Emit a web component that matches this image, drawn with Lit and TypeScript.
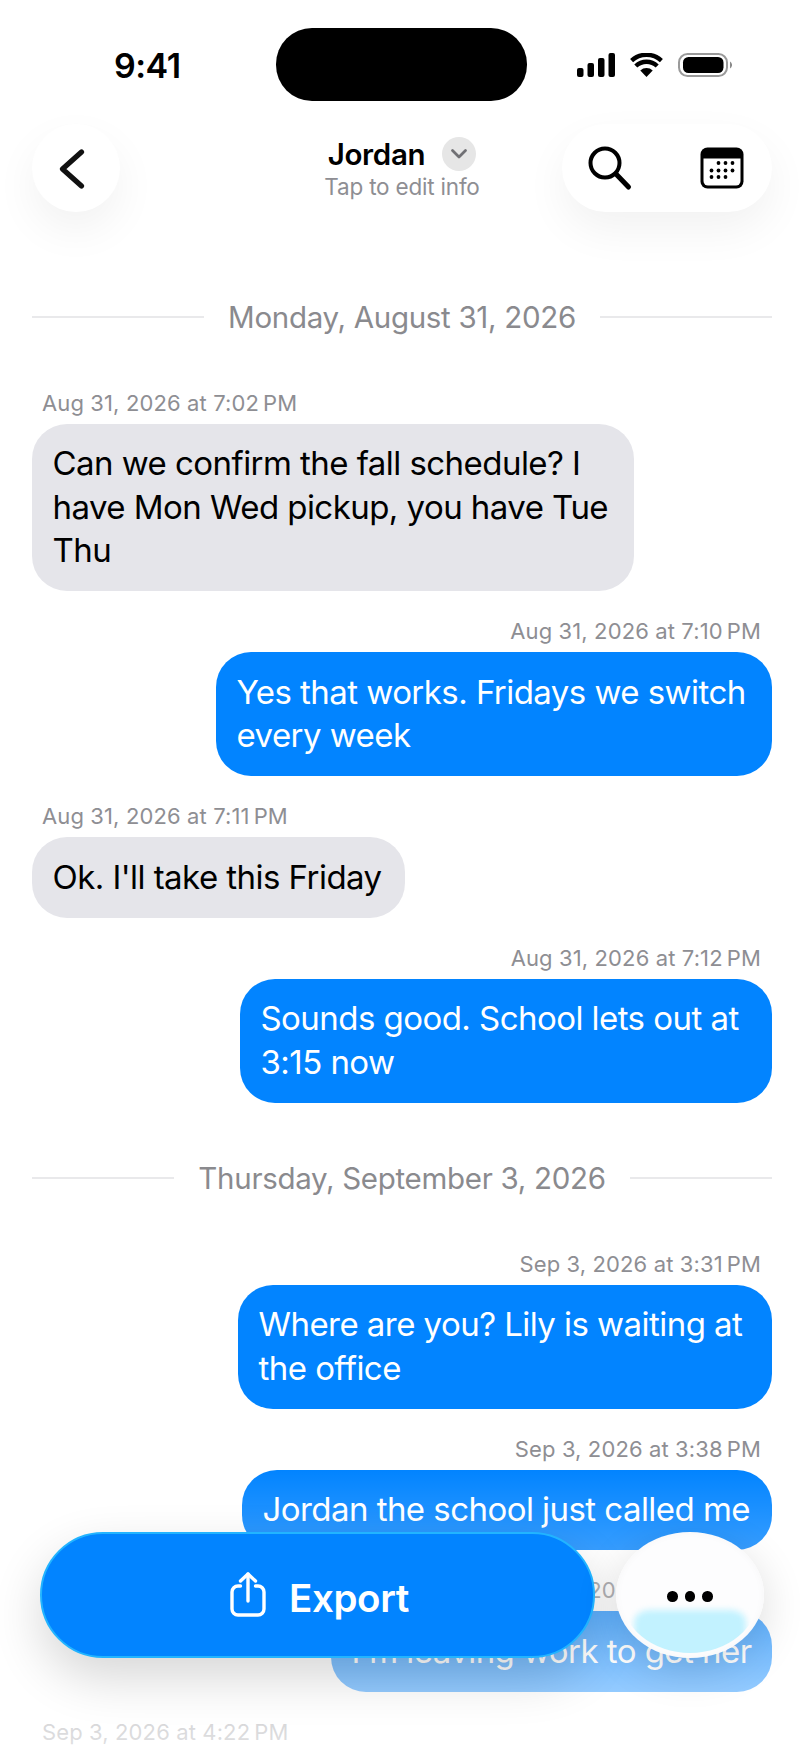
import { LitElement, html, css, svg } from "lit";
import { customElement } from "lit/decorators.js";

type Item =
  | { kind: "day"; label: string }
  | { kind: "msg"; side: "in" | "out"; ts: string; lines: string[]; w: number };

const items: Item[] = [
  { kind: "day", label: "Monday, August 31, 2026" },
  { kind: "msg", side: "in", ts: "Aug 31, 2026 at 7:02\u202FPM", w: 602, lines: ["Can we confirm the fall schedule? I", "have Mon Wed pickup, you have Tue", "Thu"] },
  { kind: "msg", side: "out", ts: "Aug 31, 2026 at 7:10\u202FPM", w: 556, lines: ["Yes that works. Fridays we switch", "every week"] },
  { kind: "msg", side: "in", ts: "Aug 31, 2026 at 7:11\u202FPM", w: 373, lines: ["Ok. I'll take this Friday"] },
  { kind: "msg", side: "out", ts: "Aug 31, 2026 at 7:12\u202FPM", w: 532, lines: ["Sounds good. School lets out at", "3:15 now"] },
  { kind: "day", label: "Thursday, September 3, 2026" },
  { kind: "msg", side: "out", ts: "Sep 3, 2026 at 3:31\u202FPM", w: 534, lines: ["Where are you? Lily is waiting at", "the office"] },
  { kind: "msg", side: "out", ts: "Sep 3, 2026 at 3:38\u202FPM", w: 530, lines: ["Jordan the school just called me"] },
  { kind: "msg", side: "out", ts: "Sep 3, 2026 at 3:52\u202FPM", w: 441, lines: ["I'm leaving work to get her"] },
  { kind: "msg", side: "in", ts: "Sep 3, 2026 at 4:22\u202FPM", w: 0, lines: [] },
];

const calendarDots = [
  [16.5, 16], [23.5, 16], [30.5, 16],
  [9.5, 23.5], [16.5, 23.5], [23.5, 23.5], [30.5, 23.5],
  [9.5, 30], [16.5, 30], [23.5, 30],
];

@customElement("app-root")
export class AppRoot extends LitElement {
  static styles = css`
    :host {
      display: block;
      position: relative;
      width: 804px;
      height: 1748px;
      overflow: hidden;
      background: #fff;
      font-family: Inter, "Liberation Sans", sans-serif;
      color: #000;
    }
    .status {
      height: 124px;
      box-sizing: border-box;
      padding: 28px 0 0 114px;
      display: flex;
      align-items: flex-start;
    }
    .time {
      width: 162px;
      margin-top: 19px;
      font-size: 34px;
      line-height: 38px;
      font-weight: 600;
      letter-spacing: -0.5px;
    }
    .island {
      width: 251px;
      height: 73px;
      border-radius: 36px;
      background: #000;
    }
    .sys {
      margin: 25px 0 0 50px;
      display: flex;
      align-items: flex-start;
    }
    .sys svg { display: block; }
    .nav {
      height: 88px;
      padding: 0 32px;
      display: grid;
      grid-template-columns: 1fr auto 1fr;
      align-items: center;
    }
    .glass {
      background: #fff;
      box-shadow: 0 18px 44px rgba(0, 0, 0, 0.055);
      display: flex;
      align-items: center;
    }
    .back {
      width: 88px;
      height: 88px;
      border-radius: 50%;
    }
    .pill {
      justify-self: end;
      width: 210px;
      height: 88px;
      border-radius: 44px;
    }
    .title {
      align-self: start;
      padding-top: 11px;
      display: flex;
      flex-direction: column;
      align-items: center;
    }
    .name-row {
      display: flex;
      align-items: center;
      gap: 17px;
      height: 38px;
    }
    .name {
      font-size: 29.5px;
      line-height: 38px;
      font-weight: 600;
      letter-spacing: -0.3px;
    }
    .badge {
      width: 34px;
      height: 34px;
      border-radius: 50%;
      background: #e6e6e6;
      display: flex;
      align-items: center;
      justify-content: center;
    }
    .sub {
      font-size: 22.5px;
      line-height: 30px;
      margin-top: -1px;
      color: #8e8e93;
      letter-spacing: -0.2px;
    }
    .list {
      padding: 84.5px 32px 0;
      display: flex;
      flex-direction: column;
    }
    .day {
      height: 40px;
      display: flex;
      align-items: center;
      gap: 24px;
      margin-bottom: 52px;
      font-size: 29.5px;
      color: #8a8a8e;
      letter-spacing: -0.3px;
      white-space: nowrap;
    }
    .msg + .day { margin-top: 29px; }
    .day::before, .day::after {
      content: "";
      flex: 1;
      height: 2px;
      background: #e9e9eb;
    }
    .msg {
      display: flex;
      flex-direction: column;
      margin-bottom: 26px;
    }
    .msg.out { align-items: flex-end; }
    .msg.in { align-items: flex-start; }
    .ts {
      font-size: 22px;
      line-height: 28px;
      margin-bottom: 7px;
      padding: 0 11px 0 10px;
      color: #8e8e93;
      letter-spacing: 0.12px;
      white-space: nowrap;
    }
    .bubble {
      box-sizing: border-box;
      padding: 18.5px 20.5px;
      border-radius: 35px;
      font-size: 33px;
      line-height: 43.5px;
      letter-spacing: -0.55px;
      white-space: nowrap;
    }
    .in .bubble { background: #e5e5ea; color: #000; }
    .out .bubble { background: #0284ff; color: #fff; }
    .bubble span { display: block; }
    .fade {
      position: absolute;
      left: 0;
      right: 0;
      top: 1470px;
      bottom: 0;
      background: linear-gradient(to bottom, rgba(255, 255, 255, 0), rgba(255, 255, 255, 0.72));
    }
    .dock {
      position: absolute;
      left: 40px;
      top: 1532px;
      width: 724px;
      display: flex;
      justify-content: space-between;
    }
    .export {
      box-sizing: border-box;
      width: 555px;
      height: 126px;
      padding: 6px 0 0 4px;
      border-radius: 63px;
      background: #0284ff;
      border: 2px solid #22b4ff;
      box-shadow: 0 20px 50px rgba(0, 0, 0, 0.16);
      display: flex;
      align-items: center;
      justify-content: center;
      gap: 23px;
      color: #fff;
      font-size: 38.5px;
      font-weight: 600;
      letter-spacing: -0.4px;
    }
    .export svg { margin-top: -8px; }
    .more-wrap {
      border-radius: 50%;
      box-shadow: 0 12px 44px rgba(0, 0, 0, 0.14);
    }
    .more {
      position: relative;
      box-sizing: border-box;
      width: 148px;
      height: 126px;
      border-radius: 50%;
      overflow: hidden;
      background: #fdfdfe;
      box-shadow: inset 0 0 8px rgba(0, 0, 0, 0.03);
      display: flex;
      justify-content: center;
      gap: 7px;
      padding-top: 59px;
    }
    .more i {
      width: 10.5px;
      height: 10.5px;
      border-radius: 50%;
      background: #000;
      position: relative;
    }
    .well {
      position: absolute;
      inset: 5px;
      border-radius: 50%;
      overflow: hidden;
    }
    .tint {
      position: absolute;
      left: 13px;
      right: 13px;
      top: 73px;
      height: 60px;
      border-radius: 16px 16px 0 0 / 12px 12px 0 0;
      background: #c2f2ff;
      filter: blur(3px);
    }
  `;

  private renderItem(item: Item) {
    if (item.kind === "day") {
      return html`<div class="day">${item.label}</div>`;
    }
    return html`
      <div class="msg ${item.side}">
        <div class="ts">${item.ts}</div>
        ${item.lines.length
          ? html`<div class="bubble" style="width:${item.w}px">
              ${item.lines.map((l) => html`<span>${l}</span>`)}
            </div>`
          : null}
      </div>
    `;
  }

  render() {
    return html`
      <div class="status">
        <div class="time">9:41</div>
        <div class="island"></div>
        <div class="sys">
          <svg width="40" height="24" viewBox="0 0 40 24">
            <rect x="0" y="15" width="6.5" height="9" rx="2" />
            <rect x="10.5" y="10" width="6.5" height="14" rx="2" />
            <rect x="21" y="5" width="6.5" height="19" rx="2" />
            <rect x="31.5" y="0" width="6.5" height="24" rx="2" />
          </svg>
          <svg style="margin-left:13px" width="33" height="24" viewBox="0 0 33 24" fill="none" stroke="#000">
            <path d="M16.5 24 L10.3 17.4 A9 9 0 0 1 22.7 17.4 Z" fill="#000" stroke="none" />
            <path d="M5.8 13 A15.5 15.5 0 0 1 27.2 13" stroke-width="4.4" />
            <path d="M1.6 7.6 A22 22 0 0 1 31.4 7.6" stroke-width="4.4" />
          </svg>
          <svg style="margin-left:15px" width="54" height="24" viewBox="0 0 54 24">
            <rect x="1" y="1" width="48" height="22" rx="8.5" fill="none" stroke="#9a9a9a" stroke-width="2" />
            <rect x="5" y="4" width="40.5" height="16" rx="5.5" fill="#000" />
            <path d="M52 8.5 a4 4 0 0 1 0 7 z" fill="#8a8a8a" />
          </svg>
        </div>
      </div>

      <div class="nav">
        <div class="glass back">
          <svg width="88" height="88" viewBox="0 0 88 88" fill="none" stroke="#111" stroke-width="5.2" stroke-linecap="round" stroke-linejoin="round">
            <path d="M49.5 28 L30.5 45 L49.5 62" />
          </svg>
        </div>
        <div class="title">
          <div class="name-row">
            <span class="name">Jordan</span>
            <span class="badge">
              <svg width="18" height="12" viewBox="0 0 18 12" fill="none" stroke="#707074" stroke-width="2.8" stroke-linecap="round" stroke-linejoin="round">
                <path d="M2.5 2.5 L9 9 L15.5 2.5" />
              </svg>
            </span>
          </div>
          <div class="sub">Tap to edit info</div>
        </div>
        <div class="glass pill">
          <svg style="margin-left:25px" width="46" height="46" viewBox="0 0 46 46" fill="none" stroke="#000" stroke-width="4" stroke-linecap="round">
            <circle cx="18" cy="18" r="14.5" />
            <path d="M29 29 L41.5 42" stroke-width="5" />
          </svg>
          <svg style="margin-left:67px" width="44" height="42" viewBox="0 0 44 42">
            <rect x="0.5" y="0.5" width="43" height="41" rx="7" fill="#000" />
            <path d="M3.5 11.5 H40.5 V34 a4.5 4.5 0 0 1 -4.5 4.5 H8 a4.5 4.5 0 0 1 -4.5 -4.5 Z" fill="#fff" />
            ${calendarDots.map(([x, y]) => svg`<circle cx=${x + 2} cy=${y} r="1.9" fill="#000" />`)}
          </svg>
        </div>
      </div>

      <div class="list">${items.map((i) => this.renderItem(i))}</div>

      <div class="fade"></div>

      <div class="dock">
        <div class="export">
          <svg width="36" height="45" viewBox="0 0 36 45" fill="none" stroke="#fff" stroke-width="3.4" stroke-linecap="round" stroke-linejoin="round">
            <path d="M10.5 14 H8 a6 6 0 0 0 -6 6 V37 a6 6 0 0 0 6 6 H28 a6 6 0 0 0 6 -6 V20 a6 6 0 0 0 -6 -6 H25.5" />
            <path d="M18 2 V29" />
            <path d="M10.5 9 L18 2 L25.5 9" />
          </svg>
          <span>Export</span>
        </div>
        <div class="more-wrap">
          <div class="more">
            <div class="well"><div class="tint"></div></div>
            <i></i><i></i><i></i>
          </div>
        </div>
      </div>
    `;
  }
}
